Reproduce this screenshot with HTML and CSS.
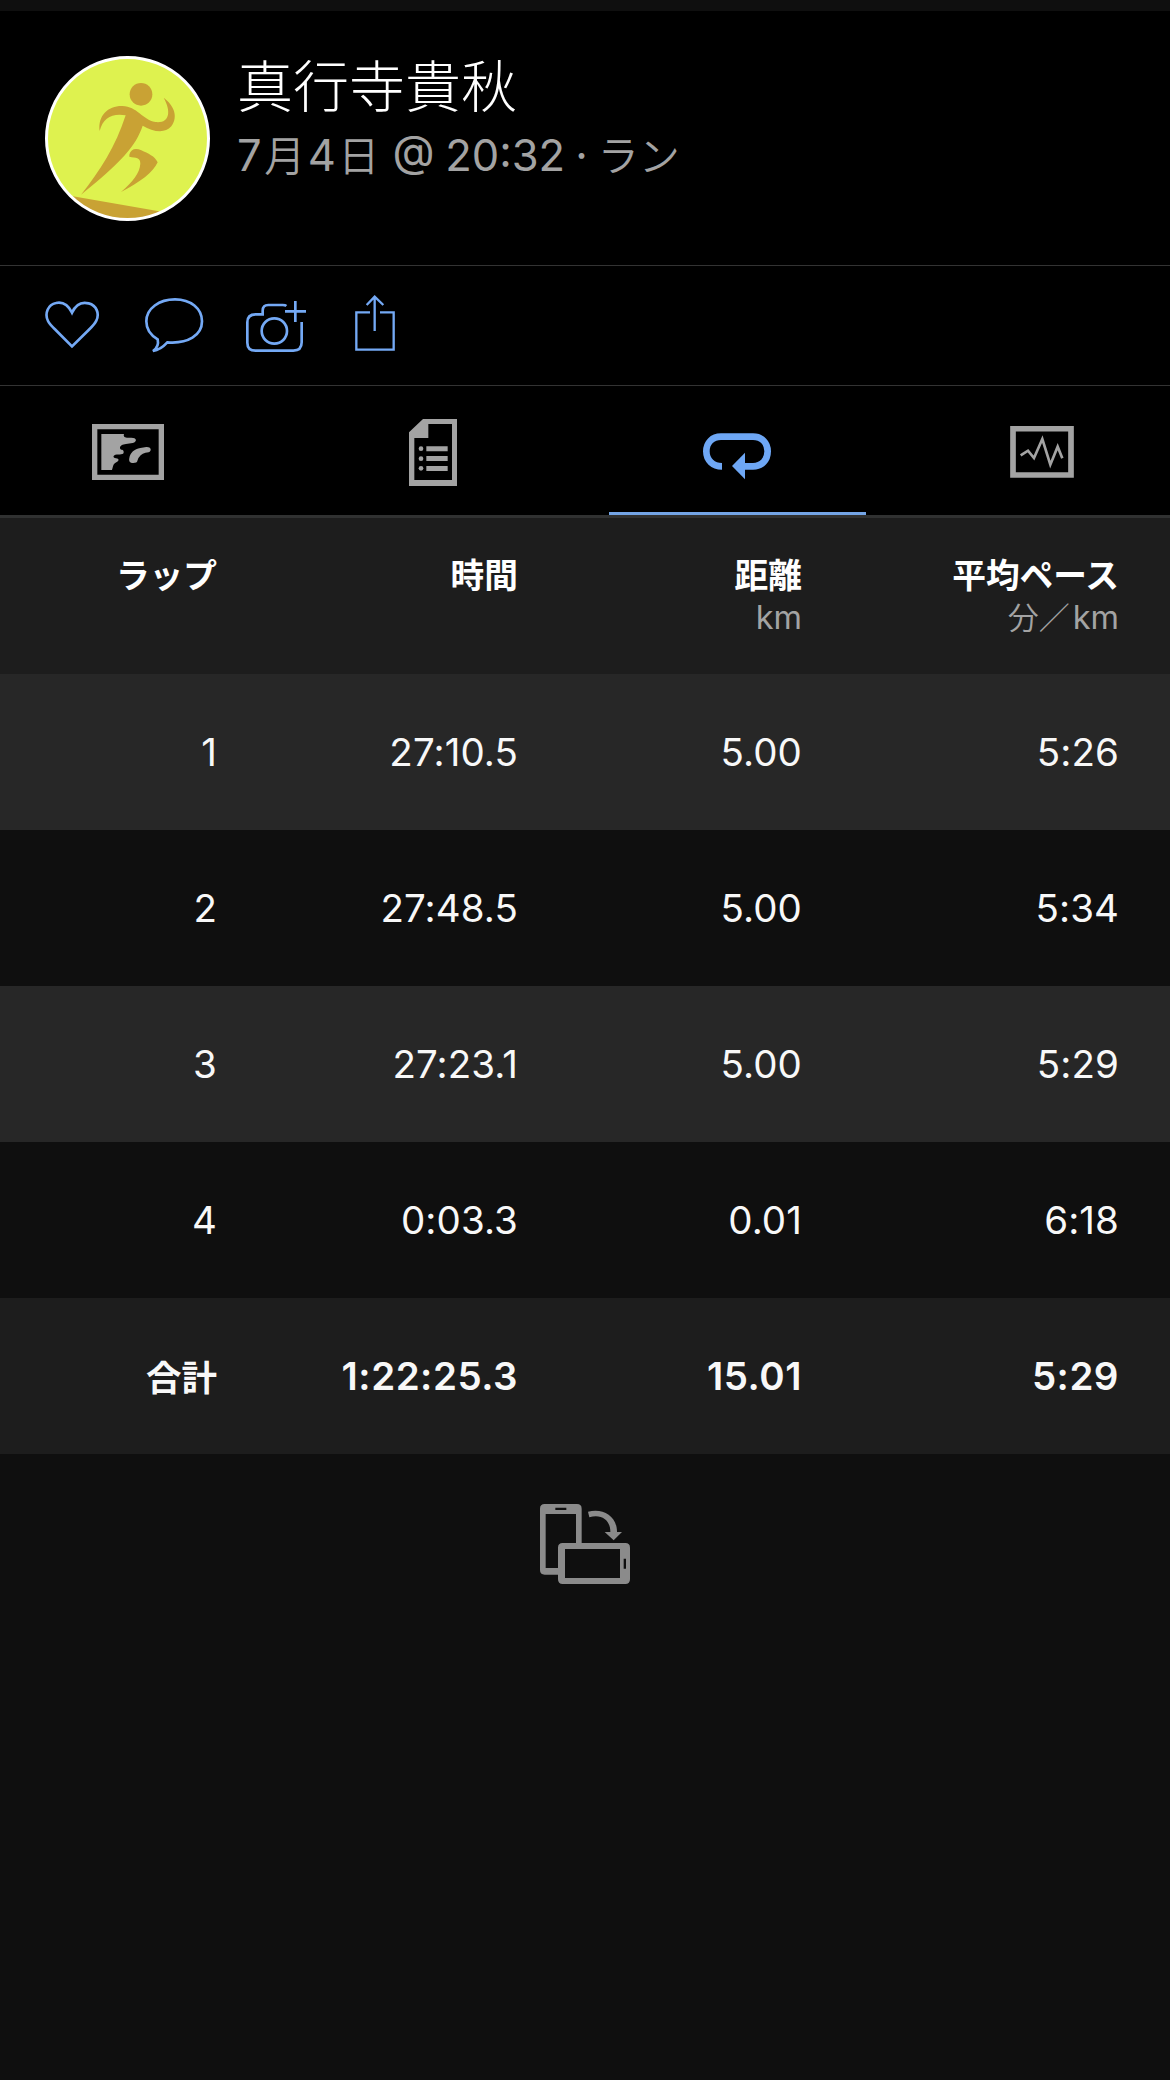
FILE: index.html
```html
<!DOCTYPE html>
<html lang="ja">
<head>
<meta charset="utf-8">
<title>ラップ</title>
<link rel="stylesheet" href="styles.css">
</head>
<body>
<header class="profile">
  <svg class="avatar" viewBox="45 48 495 495">
    <defs><clipPath id="disc"><circle cx="292.500" cy="295.500" r="243"/></clipPath></defs>
    <circle cx="292.500" cy="295.500" r="243" fill="#def24f"/>
    <g fill="#c9a234">
      <path clip-path="url(#disc)" d="M120 467L400 516V560H120Z"/>
      <circle cx="333" cy="163" r="34"/>
      <path d="M209 273C203 226 235 197 277 198C322 199 337 239 376 246C418 251 425 216 401 173C431 195 446 229 424 259C403 283 368 274 338 257C318 317 275 366 153 464C210 393 257 319 287 226C246 219 219 234 209 273Z"/>
      <path d="M298 344C302 328 316 323 334 331C354 340 375 349 383 367C369 398 331 426 273 456C309 425 329 399 331 371C331 351 318 354 298 350Z"/>
    </g>
    <circle cx="292.500" cy="295.500" r="243" fill="none" stroke="#fff" stroke-width="9"/>
  </svg>
  <div class="identity">
    <h1 class="name">真行寺貴秋</h1>
    <p class="meta">7<span class="kanji">月</span>4<span class="kanji">日</span> @ 20:32<span class="dot">·</span><span class="kana">ラン</span></p>
  </div>
</header>

<nav class="actions">
  <svg class="icon heart" viewBox="42 60 168 147"><path d="M126 98C112 70 92 66 78 69C54 73 43 101 54 123C59 133 70 143 77 150L126 199L176 150C184 142 193 134 199 122C209 101 200 76 176 70C157 65 138 72 126 98Z"/></svg>
  <svg class="icon comment" viewBox="342 51 180 168"><path d="M369 213C383 203 386 191 383 178C360 165 349 147 349 124C349 85 388 58 435 58C482 58 516 86 516 124C516 166 474 192 412 187C400 200 389 210 369 213Z"/></svg>
  <svg class="icon camera" viewBox="45 60 186 159"><path d="M169 78Q166 75 158 75H115Q98 75 98 92V103H77Q52 103 52 127V188Q52 212 77 212H190Q215 212 215 187V126"/><circle cx="133" cy="153" r="38"/><path d="M165 94H228M196 63V126"/></svg>
  <svg class="icon share" viewBox="372 45 126 171"><path d="M420 97H379V209H491V97H450M434 153V51M410 75L434 50L460 75"/></svg>
</nav>

<nav class="tabs">
  <div class="tab"><svg class="map" viewBox="36 42 216 168"><path d="M44 50H244V202H44Z" fill="none" stroke="currentColor" stroke-width="16"/><path d="M64 72H132C130 78 132 83 141 83H154C170 83 173 94 158 99L138 102C128 103 119 107 120 115C122 122 131 117 131 126C132 135 118 133 106 134C98 138 99 143 108 145C118 146 118 153 109 157C98 162 100 170 96 180H64Z"/><path d="M148 144C151 128 163 117 181 114L199 111C213 110 217 122 206 127C192 128 183 133 177 142C170 151 176 159 160 159C149 159 146 153 148 144Z"/></svg></div>
  <div class="tab"><svg class="report" viewBox="57 42 144 201"><path fill-rule="evenodd" d="M99 42H201V243H57V82ZM115 57V99H73V225H186V57Z"/><circle cx="93" cy="131" r="7"/><circle cx="93" cy="161" r="7"/><circle cx="93" cy="190" r="7"/><path d="M109 124H173V139H109ZM109 153H173V168H109ZM109 183H173V198H109Z"/></svg></div>
  <div class="tab active"><svg class="laps" viewBox="309 69 204 141"><path d="M366 169C339 169 319 151 319 124C319 98 337 80 363 80H459C485 80 503 98 503 124C503 151 485 169 459 169H430" fill="none" stroke="currentColor" stroke-width="20"/><path d="M396 168L435 128V208Z"/></svg></div>
  <div class="tab last"><svg class="chart" viewBox="60 48 192 156"><path d="M69 56H243V195H69Z" fill="none" stroke="currentColor" stroke-width="17"/><path d="M92 136L114 122L132 144L157 87L181 164L203 110L217 145" fill="none" stroke="currentColor" stroke-width="8"/></svg></div>
</nav>

<table class="lap-table">
  <colgroup><col class="c1"><col class="c2"><col class="c3"><col class="c4"></colgroup>
  <thead>
    <tr><th>ラップ</th><th>時間</th><th>距離<small>km</small></th><th>平均ペース<small><span class="unit">分／</span>km</small></th></tr>
  </thead>
  <tbody>
    <tr><td>1</td><td>27:10.5</td><td>5.00</td><td>5:26</td></tr>
    <tr><td>2</td><td>27:48.5</td><td>5.00</td><td>5:34</td></tr>
    <tr><td>3</td><td>27:23.1</td><td>5.00</td><td>5:29</td></tr>
    <tr><td>4</td><td>0:03.3</td><td>0.01</td><td>6:18</td></tr>
  </tbody>
  <tfoot>
    <tr><td class="total">合計</td><td>1:22:25.3</td><td>15.01</td><td>5:29</td></tr>
  </tfoot>
</table>

<div class="rotate">
  <svg viewBox="60 42 270 240"><path fill-rule="evenodd" d="M74 42H171Q185 42 185 56V160H168V72H77V234H114V254H74Q60 254 60 240V56Q60 42 74 42ZM106 53V60H139V53Z"/><path fill-rule="evenodd" d="M128 159H316Q330 159 330 173V268Q330 282 316 282H128Q114 282 114 268V173Q114 159 128 159ZM135 177V264H300V177ZM311 206V236H318V206Z"/><path d="M204 65C248 53 291 77 291 126H306L281 151L254 126H271C272 93 246 70 208 82Z"/></svg>
</div>
</body>
</html>
```
FILE: styles.css
```css
* { box-sizing: border-box; }
body {
  margin: 0;
  padding-top: 11px;
  min-height: 2080px;
  background: #0f0f0f;
  color: #fff;
  font-family: Inter, "Noto Sans CJK JP", sans-serif;
}
svg { display: block; fill: currentColor; }

.profile {
  display: flex;
  height: 255px;
  padding: 45px 45px 0;
  background: #000;
  border-bottom: 1px solid #333;
}
.avatar { width: 165px; height: 165px; }
.identity { padding-left: 27px; }
.name {
  margin: -5px 0 0;
  font: 300 56px/64px "Noto Sans CJK JP", sans-serif;
}
.meta {
  margin: 12px 0 0;
  font-size: 43.500px;
  line-height: 56px;
  word-spacing: -1.500px;
  color: #a3a3a3;
  white-space: nowrap;
}
.kanji, .kana, .unit { font-family: "Noto Sans CJK JP", sans-serif; font-weight: 350; }
.kanji, .kana { font-size: 41px; line-height: 40px; }
.kanji { margin: 0 2.500px; }
.dot { margin: 0 10px; }

.actions {
  display: flex;
  height: 120px;
  padding: 0 44px;
  background: #000;
  border-bottom: 1px solid #333;
  color: #74a9f5;
}
.icon { fill: none; stroke: currentColor; stroke-width: 8; }
.heart { width: 56px; height: 49px; margin-top: 34px; }
.comment { width: 60px; height: 56px; margin: 31px 0 0 44px; }
.camera { width: 62px; height: 53px; margin: 34px 0 0 41px; }
.share { width: 42px; height: 57px; margin: 29px 0 0 47px; stroke-width: 7; }

.tabs {
  display: grid;
  grid-template-columns: 256px 353px 257px 304px;
  height: 132px;
  background: #000;
  border-bottom: 3px solid #303131;
  color: #a3a3a3;
}
.tab { display: flex; justify-content: center; }
.active { padding-right: 2px; color: #6ea7f5; border-bottom: 3px solid #74a5e6; }
.last { padding-left: 48px; }
.map { width: 72px; height: 56px; margin-top: 38px; }
.report { width: 48px; height: 67px; margin-top: 33px; }
.laps { width: 68px; height: 47px; margin-top: 47px; }
.chart { width: 64px; height: 52px; margin-top: 40px; }

.lap-table {
  width: 1170px;
  table-layout: fixed;
  border-collapse: collapse;
  font-size: 38.500px;
  line-height: 48px;
  letter-spacing: 0.100px;
}
.c1 { width: 217px; }
.c2 { width: 301px; }
.c3 { width: 284px; }
.c4 { width: 368px; }
tr { height: 156px; }
th, td { padding: 0; text-align: right; }
th:last-child, td:last-child { padding-right: 51px; }
thead, tfoot { background: #1d1d1d; }
tbody tr:nth-child(odd) { background: #272727; }
td { color: #f8f8f8; }
th {
  padding-top: 34px;
  vertical-align: top;
  font: 700 33.700px/44px "Noto Sans CJK JP", sans-serif;
  letter-spacing: 0;
}
small {
  display: block;
  margin-top: 2px;
  font: 400 32.500px/40px Inter, sans-serif;
  color: #a3a3a3;
}
.unit { margin-right: 3px; font-size: 31px; line-height: 30px; }
tfoot td { font-weight: 600; letter-spacing: 0.500px; }
tfoot .total { padding-top: 0; font: 700 35.500px/46px "Noto Sans CJK JP", sans-serif; letter-spacing: 0; }

.rotate { display: flex; justify-content: center; padding-top: 50px; color: #8b8b8b; }
.rotate svg { width: 90px; height: 80px; }
```
